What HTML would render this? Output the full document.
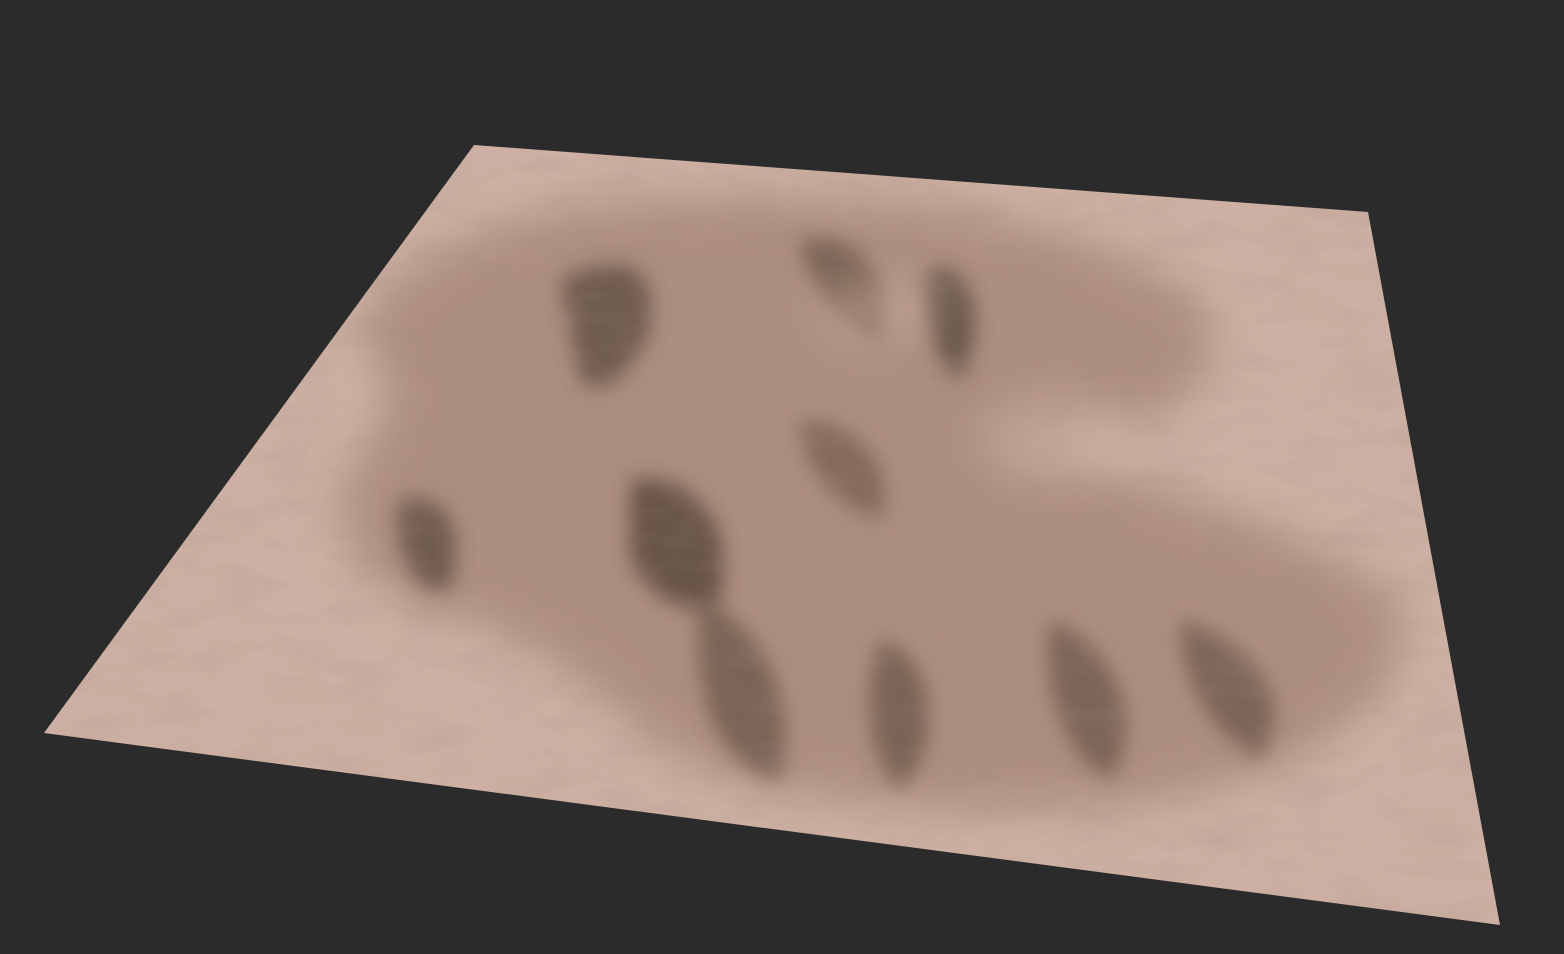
<!DOCTYPE html>
<html><head><style>
html,body{margin:0;padding:0;background:#2b2b2b;width:1564px;height:954px;overflow:hidden}
</style></head><body>
<svg width="1564" height="954" viewBox="0 0 1564 954" xmlns="http://www.w3.org/2000/svg">
<defs>
<clipPath id="c"><polygon points="474,145 1368,212 1500,925 44,733"/></clipPath>
<filter id="b" x="-20%" y="-20%" width="140%" height="140%"><feGaussianBlur stdDeviation="22"/></filter>
<filter id="b2" x="-20%" y="-20%" width="140%" height="140%"><feGaussianBlur stdDeviation="10"/></filter>
<filter id="n"><feTurbulence type="fractalNoise" baseFrequency="0.015 0.04" numOctaves="3" seed="4"/><feColorMatrix values="0 0 0 0 0.35  0 0 0 0 0.26  0 0 0 0 0.22  0 0 0 -1.2 0.7"/></filter>
</defs>
<rect width="1564" height="954" fill="#2b2b2b"/>
<polygon points="474,145 1368,212 1500,925 44,733" fill="#cdb0a3"/>
<g clip-path="url(#c)">
<g filter="url(#b)">
<path d="M360,320 C430,220 600,190 800,200 C950,200 1100,230 1200,300 C1250,380 1150,440 1050,440 C1100,480 1300,520 1400,600 C1420,700 1300,780 1150,800 C950,820 780,800 680,760 C600,700 540,630 430,610 C350,580 330,520 350,470 C380,430 400,400 380,370 Z" fill="#ad8f7f"/>
</g>
<g filter="url(#b2)" opacity="0.6">
<path d="M560,280 C620,250 660,260 650,330 C630,380 600,400 580,380 Z" fill="#4a3a32"/>
<path d="M800,240 C860,230 900,280 880,340 C840,320 810,290 800,240Z" fill="#5a463b"/>
<path d="M930,270 C970,260 990,320 960,380 C930,360 920,300 930,270Z" fill="#3e312a"/>
<path d="M400,500 C440,490 470,520 450,590 C420,600 390,560 400,500Z" fill="#4a3a32"/>
<path d="M630,480 C680,470 740,510 720,600 C690,620 650,600 630,560Z" fill="#3d2f28"/>
<path d="M700,600 C760,620 800,700 780,780 C720,770 690,700 700,600Z" fill="#5a463b"/>
<path d="M880,640 C930,650 950,740 900,790 C870,760 860,700 880,640Z" fill="#5a463b"/>
<path d="M1050,620 C1110,640 1150,720 1110,780 C1070,760 1040,700 1050,620Z" fill="#5d4a3e"/>
<path d="M1180,620 C1250,640 1300,700 1260,760 C1220,740 1180,690 1180,620Z" fill="#5d4a3e"/>
<path d="M800,420 C860,420 900,470 880,520 C840,510 800,470 800,420Z" fill="#6a5244"/>
</g>
<g filter="url(#b)" opacity="0.5">
<ellipse cx="1060" cy="440" rx="80" ry="40" fill="#d8bcae"/>
<ellipse cx="880" cy="310" rx="60" ry="30" fill="#d0b3a3"/>
</g>
<rect width="1564" height="954" filter="url(#n)" opacity="0.35"/>
</g>
</svg>
</body></html>
